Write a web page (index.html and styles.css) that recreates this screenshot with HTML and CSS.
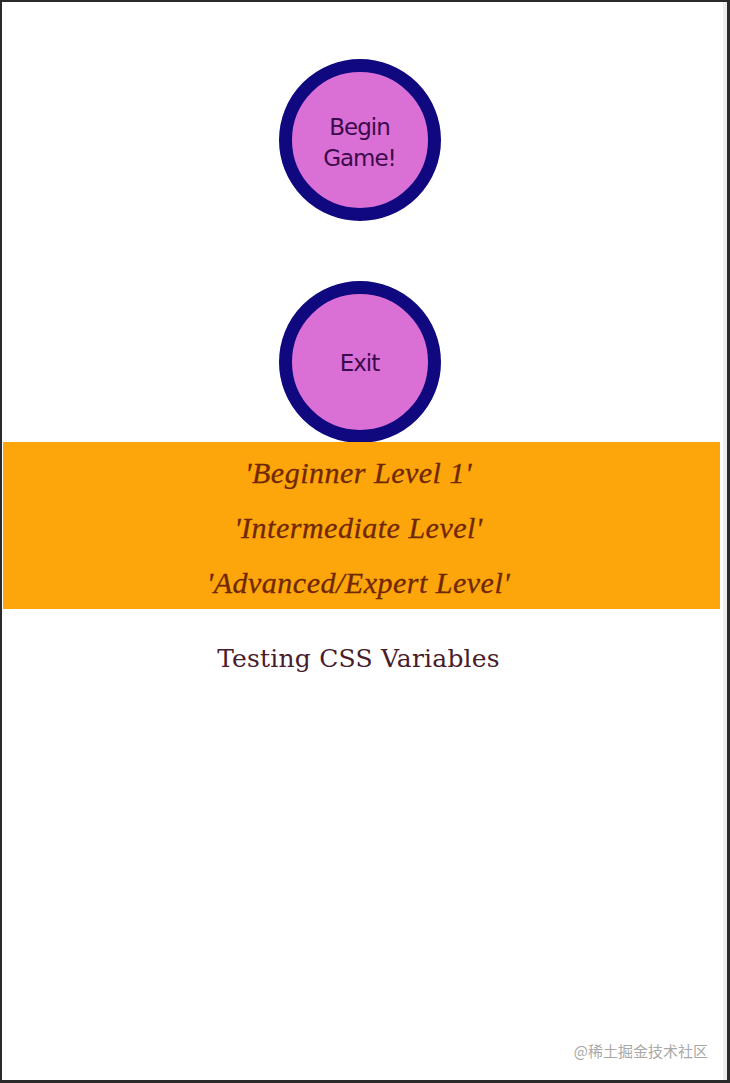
FILE: index.html
```html
<!DOCTYPE html>
<html>
<head>
<meta charset="utf-8">
<link rel="stylesheet" href="styles.css">
</head>
<body>
<div class="frame">
  <div class="content">
    <div class="buttons">
      <button class="circle circle-begin">Begin<br>Game!</button>
      <button class="circle">Exit</button>
    </div>
    <div class="levels">
      <p class="level">'Beginner Level 1'</p>
      <p class="level">'Intermediate Level'</p>
      <p class="level">'Advanced/Expert Level'</p>
    </div>
    <h1 class="title">Testing CSS Variables</h1>
  </div>
  <div class="watermark">@稀土掘金技术社区</div>
</div>
</body>
</html>
```
FILE: styles.css
```css
html, body {
  margin: 0;
  padding: 0;
  background: #ffffff;
}
.frame {
  box-sizing: border-box;
  width: 730px;
  height: 1083px;
  border-top: 2px solid #2a2a2a;
  border-left: 2px solid #2a2a2a;
  border-right: 3px solid #2a2a2a;
  border-bottom: 3px solid #2a2a2a;
  background: #ffffff;
  box-shadow: inset -4px 0 0 #ececec;
  position: relative;
  overflow: hidden;
}
.content {
  box-sizing: border-box;
  margin-left: 1px;
  width: 717px;
  display: flex;
  flex-direction: column;
  align-items: stretch;
}
.buttons {
  display: flex;
  flex-direction: column;
  align-items: center;
  gap: 60px;
  padding-top: 57px;
  padding-right: 4px;
}
.circle {
  box-sizing: border-box;
  width: 162px;
  height: 162px;
  border-radius: 50%;
  border: 13px solid #10087f;
  background: #da70d6;
  color: #3c0a4c;
  font-family: "DejaVu Sans", sans-serif;
  font-size: 23px;
  line-height: 31px;
  padding: 2px 0 0;
  text-align: center;
  letter-spacing: -1px;
}
.circle-begin {
  padding-top: 6px;
}
.levels {
  margin-top: -1px;
  background: #fca60b;
  padding-top: 3px;
  height: 167px;
  box-sizing: border-box;
}
.level {
  margin: 0;
  text-align: center;
  font-family: "Liberation Serif", serif;
  font-style: italic;
  font-size: 30px;
  line-height: 55px;
  color: #702804;
  padding-right: 6px;
  letter-spacing: 0.5px;
  -webkit-text-stroke: 0.3px #702804;
}
.title {
  margin: 34px 0 0;
  text-align: center;
  font-family: "DejaVu Serif", serif;
  font-weight: normal;
  font-size: 25px;
  line-height: 32px;
  color: #4a1c2c;
  padding-right: 6px;
  letter-spacing: 0.2px;
}
.watermark {
  position: absolute;
  right: 19px;
  bottom: 19px;
  font-family: "Noto Sans CJK SC", sans-serif;
  font-size: 15px;
  color: #a8a8a8;
  line-height: 20px;
}
```
